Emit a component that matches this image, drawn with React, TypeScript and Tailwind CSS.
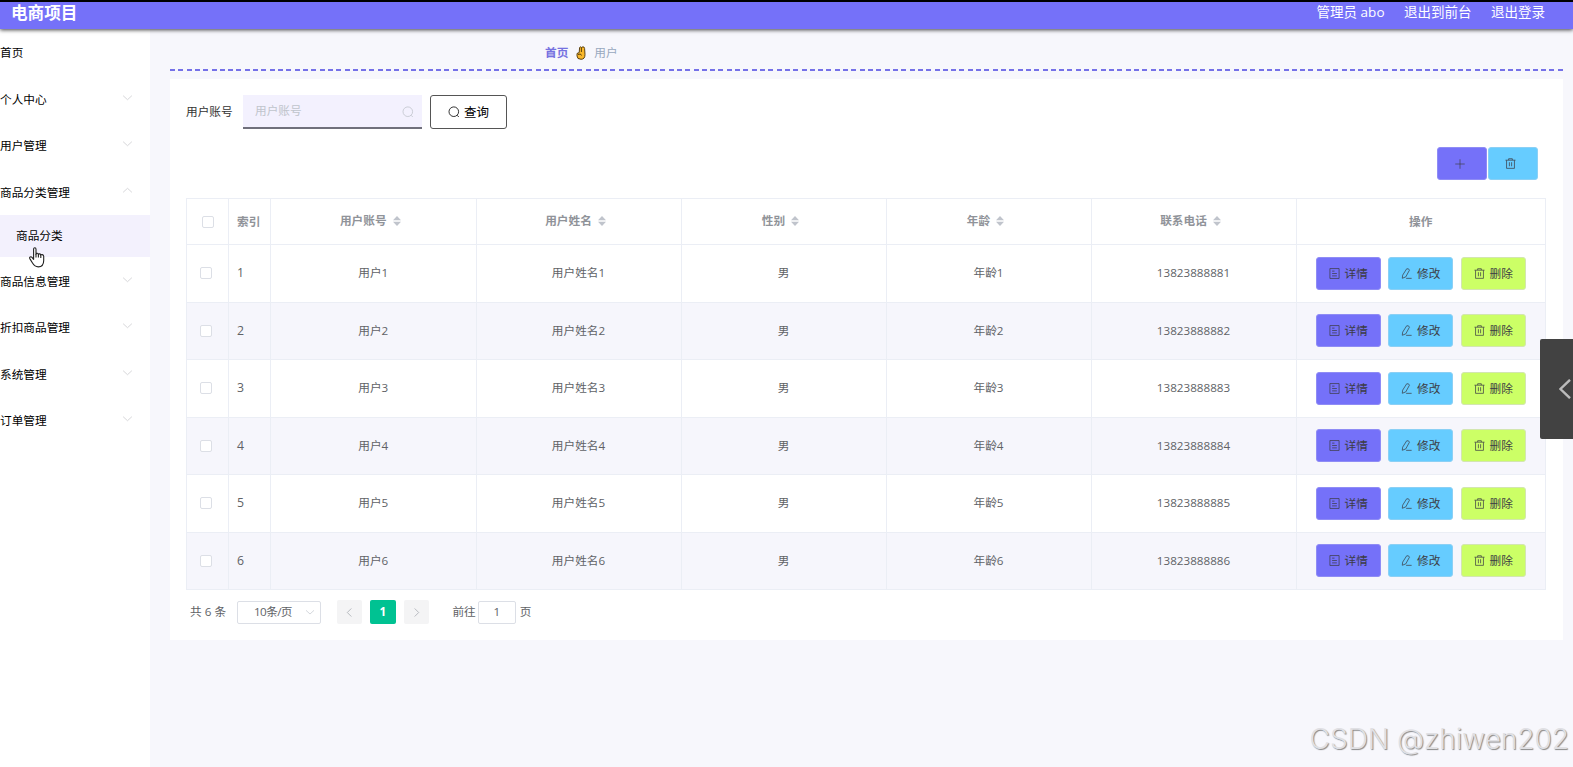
import React from "react";

const menus = [
    {name: "首页"},
    {name: "个人中心", arrow: "down"},
    {name: "用户管理", arrow: "down"},
    {name: "商品分类管理", arrow: "up", children: ["商品分类"]},
    {name: "商品信息管理", arrow: "down"},
    {name: "折扣商品管理", arrow: "down"},
    {name: "系统管理", arrow: "down"},
    {name: "订单管理", arrow: "down"},
];

const columns = ["用户账号", "用户姓名", "性别", "年龄", "联系电话"];

const rows = [1, 2, 3, 4, 5, 6].map((n) => ({
    index: n,
    cells: [`用户${n}`, `用户姓名${n}`, "男", `年龄${n}`, `1382388888${n}`],
}));

const grid = "grid grid-cols-[42px_42px_205.5px_205px_205px_205px_205px_1fr]";

const Icon = ({d, className = ""}: {d: string; className?: string}) => (
    <svg viewBox="0 0 12 12" className={`shrink-0 ${className}`} fill="none" stroke="currentColor" strokeWidth="0.8">
        <path d={d}/>
    </svg>
);

const SEARCH = "M9 9.2L10.8 11M5.8 .9a4.8 4.8 0 1 0 0 9.6a4.8 4.8 0 1 0 0-9.6";
const TRASH = "M.5 2.4h11M4 2.3V.8h4v1.5M1.7 2.5v8.8h8.6V2.5M4.8 4.6v4.4M7.2 4.6v4.4";
const TICKETS = "M1 .6h10v10.8H1zM3.4 3.4h2.6M3.4 6h5.2M3.4 8.6h5.2";
const EDIT = "M6.2 .9q2.4-.7 3 1.5L5.2 9.7l-3.8 1.5l.4-3.4zM5.6 11.3h6";
const PLUS = "M6 .3v11.4M.3 6h11.4";
const DOWN = "M1.2 4l4.8 4.4L10.8 4";
const UP = "M1.2 8L6 3.6L10.8 8";
const LEFT = "M8 1.6L3.6 6L8 10.4";
const RIGHT = "M4 1.6L8.4 6L4 10.4";

const Checkbox = () => <span className="block size-3 rounded-xs border border-[#dcdfe6] bg-white"/>;

const Sort = () => (
    <svg viewBox="0 0 8 10" className="ml-1.5 h-[10px] w-2" fill="#c0c4cc">
        <path d="M4 0L8 4.2H0zM4 10L8 5.8H0z"/>
    </svg>
);

const Action = ({icon, text, className}: {icon: string; text: string; className: string}) => (
    <button className={`flex h-[33px] w-[65px] items-center justify-center gap-[5px] rounded-[3px] border text-[#3c3c44] ${className}`}>
        <Icon d={icon} className="size-[11px]"/>
        <span className="pt-px">{text}</span>
    </button>
);

const Header = () => (
    <header className="relative z-10 flex h-[29px] items-center justify-between border-t-2 border-black bg-[#7571f9] pr-[28px] pb-[5px] pl-[11px] text-white shadow-[0_1px_4px_rgba(0,0,0,0.75)]">
        <h1 className="text-[16.6px] font-bold">电商项目</h1>
        <div className="flex gap-[19.5px] text-[13.5px]">
            <span>管理员 abo</span>
            <span>退出到前台</span>
            <span>退出登录</span>
        </div>
    </header>
);

const Sidebar = () => (
    <aside className="relative w-[150px] bg-white text-black">
        {menus.map((m) => (
            <div key={m.name}>
                <div className="flex h-[46.6px] items-center justify-between pr-[17px]">
                    <span className="pt-[1.5px]">{m.name}</span>
                    {m.arrow && <Icon d={m.arrow === "up" ? UP : DOWN} className="mb-[3px] size-[11px] text-[#c8c8cc]"/>}
                </div>
                {m.children?.map((c) => (
                    <div key={c} className="flex h-[42px] items-center bg-[#f3f1fd] pb-px pl-4">{c}</div>
                ))}
            </div>
        ))}
        {/* pointer over the active submenu item */}
        <svg viewBox="0 0 16 21" className="absolute top-[217.5px] left-[29px] h-[21px] w-4" fill="#fff" stroke="#222" strokeWidth="1.1" strokeLinejoin="round">
            <path d="M4.6 12.4V2.2c0-1.9 2.4-1.9 2.4 0v5c.3-1.3 2.3-1.2 2.4.4c.4-1.1 2.2-1 2.4.5c.5-.9 2.7-.8 2.9 1.1v4.4c0 3.6-2 6.3-5.4 6.3c-3.1 0-4.3-1.2-5.8-3.8L.8 11.6c-.7-1.5 1.1-2.5 2.2-1.2z"/>
            <path d="M7 7v3.5M9.4 7.6v3M11.8 8.1v2.8"/>
        </svg>
    </aside>
);

const Breadcrumb = () => (
    <>
        <div className="flex h-[39.5px] items-center pt-[9px] pl-[375px]">
            <span className="font-bold text-[#7571e0]">首页</span>
            <svg viewBox="0 0 10 14" className="mr-2 ml-2 h-[14px] w-[10px]" fill="#f9b82b" stroke="#4a3208" strokeWidth="0.9">
                <path d="M1 7.5L3.2 6.5L3.6 1.5Q4.6.2 5.4 1.5L6 1Q8.5.2 8.6 2.5L9 8.5Q9 13.3 5 13.3Q1 13.3 1 10z"/>
                <path d="M5.4 1.5V6M2 8.5Q5 7 5.5 9.5"/>
            </svg>
            <span className="text-[#97a8be]">用户</span>
        </div>
        <div className="h-0.5 bg-[repeating-linear-gradient(90deg,#7571e8_0_5px,transparent_5px_8.31px)]"/>
    </>
);

const Table = () => (
    <div className="border-t border-l border-[#ebeef5] text-[#606266]">
        <div className={`${grid} h-[46px] font-bold text-[#909399] *:flex *:items-center *:border-r *:border-b *:border-[#ebeef5]`}>
            <div className="justify-center"><Checkbox/></div>
            <div className="pl-2">索引</div>
            {columns.map((c) => (
                <div key={c} className="justify-center pr-[6px] pb-0.5">{c}<Sort/></div>
            ))}
            <div className="justify-center">操作</div>
        </div>
        {rows.map((r) => (
            <div key={r.index} className={`${grid} h-[57.5px] *:flex *:items-center *:border-r *:border-b *:border-[#ebeef5] even:bg-white odd:bg-[#f6f6fc]`}>
                <div className="pl-[13px]"><Checkbox/></div>
                <div className="pl-2 text-[12.3px]">{r.index}</div>
                {r.cells.map((c, i) => (
                    <div key={i} className="justify-center">{c}</div>
                ))}
                <div className="justify-center gap-[7.5px]">
                    <Action icon={TICKETS} text="详情" className="border-[#8f8cf5] bg-[#7571f9]"/>
                    <Action icon={EDIT} text="修改" className="border-[#8bd0f5] bg-[#66ccff]"/>
                    <Action icon={TRASH} text="删除" className="border-[#d3e6b0] bg-[#ccff66]"/>
                </div>
            </div>
        ))}
    </div>
);

const Pagination = () => (
    <div className="mt-[10px] flex h-[24px] items-center pl-1 text-[#606266]">
        <span className="w-[47px]">共 6 条</span>
        <div className="mr-4 flex h-[23px] w-[84px] items-center justify-between rounded-xs border border-[#dcdfe6] pr-[5px] pl-4 tracking-[-0.6px]">
            10条/页
            <Icon d={DOWN} className="size-[10px] text-[#c0c4cc]"/>
        </div>
        <div className="flex gap-2 *:flex *:h-[24px] *:w-[25.3px] *:items-center *:justify-center *:rounded-xs">
            <span className="bg-[#f4f4f5] text-[#a0a4ac]"><Icon d={LEFT} className="size-[11px]"/></span>
            <span className="bg-[#00c292] font-bold text-white">1</span>
            <span className="bg-[#f4f4f5] text-[#a0a4ac]"><Icon d={RIGHT} className="size-[11px]"/></span>
        </div>
        <span className="ml-[23.5px]">前往</span>
        <span className="mr-1 ml-[2px] flex h-[23px] w-[38px] items-center justify-center rounded-xs border border-[#dcdfe6]">1</span>
        <span>页</span>
    </div>
);

const App = () => (
    <div className="relative flex h-[767px] w-[1573px] flex-col overflow-hidden bg-[#f7f7fc] font-['Open_Sans','Noto_Sans_CJK_SC',sans-serif] text-[11.67px] leading-none">
        <Header/>
        <div className="flex flex-1">
            <Sidebar/>
            <main className="mr-[10px] ml-5 flex-1">
                <Breadcrumb/>
                <section className="mt-2 h-[561.5px] bg-white pt-[16.5px] pr-[17px] pl-4">
                    <div className="flex h-[34px] items-center text-[#333]">
                        <span className="w-[57px]">用户账号</span>
                        <div className="flex h-full w-[179px] items-center justify-between border-b-2 border-[#70707c] bg-[#f3f1fe] pr-2 pl-3 text-[#c0c4cc]">
                            用户账号
                            <Icon d={SEARCH} className="mt-px size-3"/>
                        </div>
                        <button className="ml-2 flex h-full w-[77px] items-center justify-center gap-1 rounded-[3px] border border-[#555] text-[12.5px] text-black">
                            <Icon d={SEARCH} className="size-3"/>
                            <span className="pt-0.5">查询</span>
                        </button>
                    </div>
                    <div className="mt-[18px] mb-[18px] flex justify-end gap-px pr-2">
                        <button className="flex h-[33px] w-[50px] items-center justify-center rounded-[3px] border border-[#8f8cf5] bg-[#7571f9] pr-1 text-[#3c3c44]">
                            <Icon d={PLUS} className="size-[10px]"/>
                        </button>
                        <button className="flex h-[33px] w-[50px] items-center justify-center rounded-[3px] border border-[#8bd0f5] bg-[#66ccff] pr-[5px] text-[#3c3c44]">
                            <Icon d={TRASH} className="size-[11px]"/>
                        </button>
                    </div>
                    <Table/>
                    <Pagination/>
                </section>
            </main>
        </div>
        <div className="absolute top-[339px] right-0 flex h-[100px] w-[33px] items-center justify-end rounded-l-xs bg-[#424242] pr-0.5">
            <svg viewBox="0 0 12 20" className="h-5 w-3" fill="none" stroke="#bbb" strokeWidth="2.4">
                <path d="M11 .8L1.5 10L11 19.2"/>
            </svg>
        </div>
        <div className="absolute right-[4px] bottom-[14px] font-['Inter','Liberation_Sans',sans-serif] text-[28px] font-light whitespace-nowrap text-[#e0e0e4] [text-shadow:1px_1px_1px_#888]">
            CSDN @zhiwen202
        </div>
    </div>
);

export default App;
